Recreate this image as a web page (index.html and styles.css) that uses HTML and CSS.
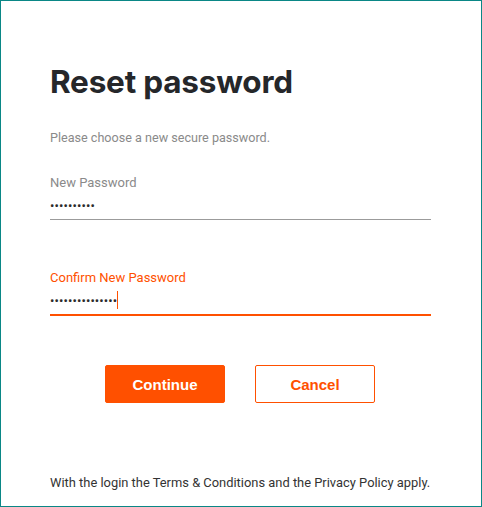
FILE: index.html
```html
<!DOCTYPE html>
<html lang="en">
<head>
<meta charset="utf-8">
<title>Reset password</title>
<link rel="stylesheet" href="styles.css">
</head>
<body>
<main class="frame">
  <h1 class="title">Reset password</h1>
  <p class="intro">Please choose a new secure password.</p>
  <div class="field">
    <label class="label">New Password</label>
    <div class="value"><span class="dots">••••••••••</span></div>
  </div>
  <div class="field active">
    <label class="label">Confirm New Password</label>
    <div class="value"><span class="dots">•••••••••••••••</span><span class="caret"></span></div>
  </div>
  <div class="actions">
    <button class="btn primary">Continue</button>
    <button class="btn secondary">Cancel</button>
  </div>
  <p class="legal">With the login the Terms &amp; Conditions and the Privacy Policy apply.</p>
</main>
</body>
</html>
```
FILE: styles.css
```css
html, body {
  margin: 0;
  padding: 0;
  background: #fff;
}
.frame {
  box-sizing: border-box;
  width: 482px;
  height: 507px;
  border: 1px solid #0a8786;
  padding: 0 50px 0 49px;
  display: flex;
  flex-direction: column;
  font-family: Roboto, "Liberation Sans", sans-serif;
}
.title {
  margin: 61px 0 0;
  font-family: Inter, Roboto, sans-serif;
  font-weight: 700;
  font-size: 31.5px;
  line-height: 40px;
  color: #25272a;
  letter-spacing: -0.2px;
}
.intro {
  margin: 28px 0 0;
  font-size: 12.6px;
  line-height: 16px;
  color: #8a8a8a;
}
.field {
  margin-top: 29px;
  border-bottom: 1px solid #9b9b9b;
}
.field.active {
  margin-top: 50px;
  border-bottom: 2px solid #ff5000;
}
.label {
  display: block;
  font-size: 13px;
  line-height: 16px;
  color: #8a8a8a;
}
.active .label {
  color: #ff5000;
}
.value {
  display: flex;
  align-items: center;
  height: 28px;
}
.dots {
  font-size: 13px;
  color: #2b2b2b;
  letter-spacing: 0.1px;
}
.caret {
  width: 1px;
  height: 18px;
  background: #ff5000;
  margin-left: 0;
}
.actions {
  display: flex;
  justify-content: center;
  gap: 30px;
  margin-top: 49px;
  padding-right: 1px;
}
.btn {
  box-sizing: border-box;
  width: 120px;
  height: 38px;
  border-radius: 2px;
  font-family: "Liberation Sans", Arial, sans-serif;
  font-weight: 700;
  font-size: 15px;
  cursor: pointer;
}
.primary {
  background: #ff5000;
  border: 1px solid #ff5000;
  color: #fff;
}
.secondary {
  background: #fff;
  border: 1px solid #ff5000;
  color: #ff5000;
}
.legal {
  margin: auto 0 15px;
  font-size: 12.9px;
  line-height: 16px;
  color: #333;
}
```
